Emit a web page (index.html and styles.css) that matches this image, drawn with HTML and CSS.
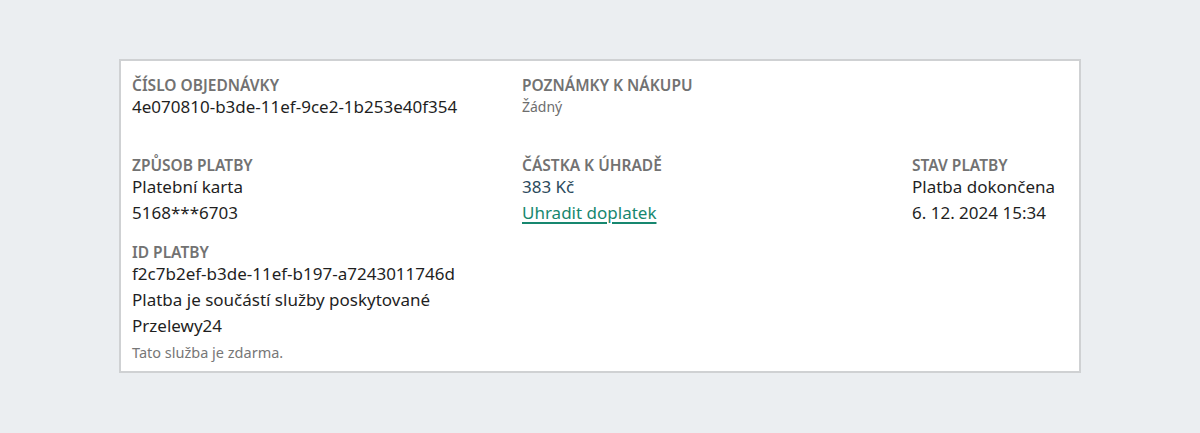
FILE: index.html
```html
<!DOCTYPE html>
<html lang="cs">
<head>
  <meta charset="UTF-8" />
  <meta name="viewport" content="width=device-width, initial-scale=1.0" />
  <title>Detail objednávky</title>
  <link rel="stylesheet" href="styles.css">
</head>
<body>
  <div class="card">
    <div class="row">
      <div class="cell">
        <div class="label">Číslo objednávky</div>
        <div class="value">4e070810-b3de-11ef-9ce2-1b253e40f354</div>
      </div>
      <div class="cell">
        <div class="label">Poznámky k nákupu</div>
        <div class="value muted">Žádný</div>
      </div>
      <div class="cell"></div>
    </div>

    <div class="row">
      <div class="cell">
        <div class="block">
          <div class="label">Způsob platby</div>
          <div class="value">Platební karta</div>
          <div class="value">5168***6703</div>
        </div>
        <div class="block">
          <div class="label">ID platby</div>
          <div class="value">f2c7b2ef-b3de-11ef-b197-a7243011746d</div>
          <div class="value">Platba je součástí služby poskytované Przelewy24</div>
          <div class="note">Tato služba je zdarma.</div>
        </div>
      </div>
      <div class="cell">
        <div class="label">Částka k úhradě</div>
        <div class="value amount">383 Kč</div>
        <div class="value"><a href="#" class="link">Uhradit doplatek</a></div>
      </div>
      <div class="cell">
        <div class="label">Stav platby</div>
        <div class="value">Platba dokončena</div>
        <div class="value">6. 12. 2024 15:34</div>
      </div>
    </div>
  </div>
</body>
</html>
```

FILE: styles.css
```css
* {
  box-sizing: border-box;
}
body {
  margin: 0;
  padding: 59px 119px 0;
  background: #ebeef1;
  font-family: 'Noto Sans', 'Open Sans', sans-serif;
  color: #1f1f1f;
}
.card {
  background: #fff;
  border: 2px solid #cfd1d3;
  padding: 15px 11px 9px;
}
.row {
  display: grid;
  grid-template-columns: 5fr 5fr 2fr;
}
.row + .row {
  margin-top: 36px;
}
.block + .block {
  margin-top: 17px;
}
.label {
  font-size: 15.5px;
  font-weight: 600;
  line-height: 18px;
  text-transform: uppercase;
  color: #727272;
}
.value {
  font-size: 17px;
  line-height: 26px;
  max-width: 380px;
}
.muted {
  color: #6e6e6e;
  font-size: 14px;
}
.amount {
  color: #2b4a5c;
}
.link {
  color: #17876f;
  text-decoration: underline;
  text-decoration-thickness: 1.5px;
  text-underline-offset: 3px;
}
.note {
  font-size: 14.5px;
  line-height: 20px;
  margin-top: 3px;
  color: #777;
}
```
